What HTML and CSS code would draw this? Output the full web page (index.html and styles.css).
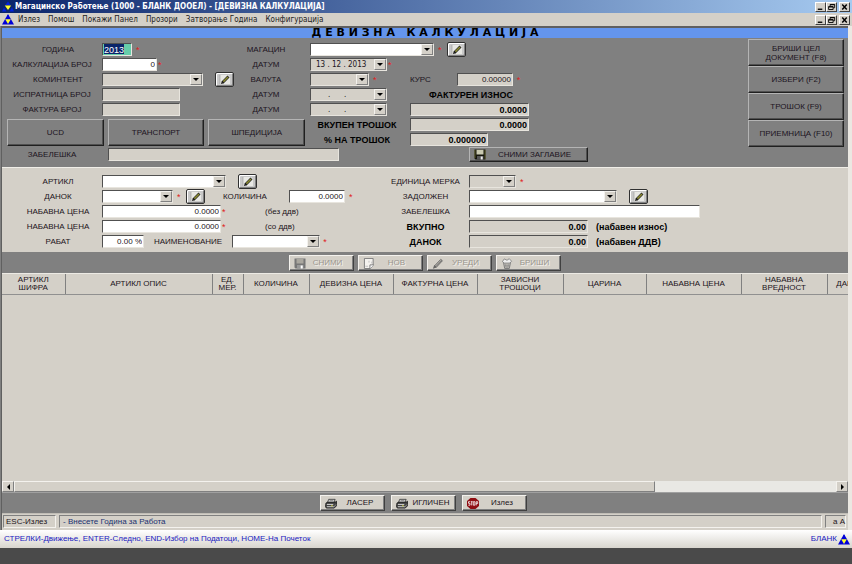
FILE: index.html
```html
<!DOCTYPE html>
<html lang="mk">
<head>
<meta charset="utf-8">
<title>Магацинско Работење</title>
<link rel="stylesheet" href="styles.css">
</head>
<body>
<svg class="defs" aria-hidden="true">
  <defs>
    <symbol id="logo" viewBox="0 0 12 11"><path d="M6 0L12 10.500H0Z" fill="#0000d8"/><path d="M3.200 5.200h5.600L6 10Z" fill="#ffff30"/><path d="M6 1v4" stroke="#0000d8"/></symbol>
    <symbol id="logo-small" viewBox="0 0 12 11"><path d="M6 .5l2.500 3.500h-5Z" fill="#0020e0"/><path d="M2.800 4.500h6.400L6 9Z" fill="#ffff30"/><path d="M2 6.500l2.500 4H0ZM10 6.500l2 4H7.500Z" fill="#0020e0"/></symbol>
    <symbol id="edit" viewBox="0 0 12 11"><path d="M1 1h8l2 2v7H1Z" fill="#e8e8e4"/><path d="M1 1v9" stroke="#999" stroke-width=".6"/><path d="M3.600 8.600L9.500 2.600" stroke="#222" stroke-width="2.800"/><path d="M4.400 7.600L9 3" stroke="#8b8b30" stroke-width="1.500"/><path d="M2 10l.8-2.800 2 2Z" fill="#111"/></symbol>
    <symbol id="disk" viewBox="0 0 12 11"><path d="M.5.500h11v10H1.500l-1-1Z" fill="#15150c"/><path d="M2.500.800h7v4.700h-7Z" fill="#c9c9b0"/><path d="M1 1v8M11 1v9" stroke="#70702c" stroke-width=".7"/><path d="M3 7h6.500v3.500H3Z" fill="#555"/><path d="M6.700 7.500h2v3h-2Z" fill="#eee"/></symbol>
    <symbol id="disk-off" viewBox="0 0 12 11"><path d="M.5.500h11v10H1.500l-1-1Z" fill="#777"/><path d="M2.500 1h7v4.500h-7Z" fill="#aaa79f"/><path d="M3 7h6.500v3.500H3Z" fill="#999"/><path d="M6.700 7.500h2v3h-2Z" fill="#fff"/></symbol>
    <symbol id="page-off" viewBox="0 0 12 12"><path d="M1 .500h9.500v7.500l-3 3.500H1Z" fill="#f4f2ee" stroke="#777"/><path d="M7 11.500V7.500h4" fill="#fff" stroke="#777"/><path d="M2 9h3M6 3v2M9 4v2" stroke="#bbb"/></symbol>
    <symbol id="pen-off" viewBox="0 0 12 12"><path d="M2.300 8.500L9 1.500l1.800 1.500-6.500 7Z" fill="#b4b1aa" stroke="#666"/><path d="M.4 11.700l1.500-4 2.600 2.600Z" fill="#666"/><path d="M4 9l6-6.500" stroke="#666" stroke-width=".7"/></symbol>
    <symbol id="bin-off" viewBox="0 0 12 12"><path d="M2 4h8l-1.500 7.500h-5Z" fill="#c9c6bf" stroke="#777"/><path d="M1 4l2-3 3 1.500L8.500.800 11 3.500 9 5.500H3Z" fill="#eee" stroke="#777" stroke-width=".8"/><path d="M4 6l1 5M6 6v5M8 6l-1 5M3 8.500h6" stroke="#888" stroke-width=".7"/></symbol>
    <symbol id="printer" viewBox="0 0 13 11"><path d="M4 1h7L9.500 5H2.500Z" fill="#ddd" stroke="#222" stroke-width=".8"/><path d="M1 5l2-1h8l1.500-1v5L10 10.500H1.500L.5 9Z" fill="#444" stroke="#111" stroke-width=".8"/><path d="M2 6.500h7M2 9h7.500" stroke="#ddd"/><path d="M9.500 9.500L12 6.500" stroke="#aaa" stroke-width=".8"/><path d="M5 2.500h4" stroke="#555" stroke-width=".7"/><path d="M6.500 8h2" stroke="#cccc40"/></symbol>
    <symbol id="stop" viewBox="0 0 12 11"><path d="M3.500 0h5L12 3v5l-3.500 3h-5L0 8V3Z" fill="#8f0d12"/><path d="M3 3.700H1.500v1.600H3v1.900H1.300M3.700 3.700h2M4.700 3.700v3.700M6.300 3.700h1.600v3.500H6.300ZM9.200 7.400V3.700h1.500v1.900H9.200" fill="none" stroke="#fff" stroke-width=".8"/></symbol>
    <symbol id="win-min" viewBox="0 0 10 8"><path d="M2 6.500h5" stroke="#000" stroke-width="1.500"/></symbol>
    <symbol id="win-restore" viewBox="0 0 10 8"><path d="M3.500 3V1.200h5v3.600H7M3.500 1.500h5M1.800 3.500h5v3.300h-5Z M1.800 4h5" fill="none" stroke="#000"/></symbol>
    <symbol id="win-close" viewBox="0 0 10 8"><path d="M2.500 1.200l5 5.600M7.500 1.200l-5 5.600" stroke="#000" stroke-width="1.600"/></symbol>
  </defs>
</svg>

<div class="app">
  <header class="titlebar">
    <svg class="logo"><use href="#logo-small"/></svg>
    <h1 class="title">Магацинско Работење (1000 - БЛАНК ДООЕЛ) - [ДЕВИЗНА КАЛКУЛАЦИЈА]</h1>
    <div class="winbtns">
      <button class="winbtn" aria-label="Минимизирај"><svg><use href="#win-min"/></svg></button>
      <button class="winbtn" aria-label="Обнови"><svg><use href="#win-restore"/></svg></button>
      <button class="winbtn winclose" aria-label="Затвори"><svg><use href="#win-close"/></svg></button>
    </div>
  </header>
  <nav class="menubar">
    <svg class="logo"><use href="#logo"/></svg>
    <a href="#">Излез</a><a href="#">Помош</a><a href="#">Покажи Панел</a><a href="#">Прозори</a><a href="#">Затворање Година</a><a href="#">Конфигурација</a>
    <div class="winbtns">
      <button class="winbtn" aria-label="Минимизирај прозорец"><svg><use href="#win-min"/></svg></button>
      <button class="winbtn" aria-label="Обнови прозорец"><svg><use href="#win-restore"/></svg></button>
      <button class="winbtn winclose" aria-label="Затвори прозорец"><svg><use href="#win-close"/></svg></button>
    </div>
  </nav>

  <main class="child">
    <h2 class="banner">Д Е В И З Н А   К А Л К У Л А Ц И Ј А</h2>

    <section class="head">
      <div class="head-form">
        <label class="lbl lbl-in" for="god">ГОДИНА</label>
        <div class="cell"><input id="god" class="field year" value="2013"><i class="req">*</i></div>
        <label class="lbl lbl-mid" for="mag">МАГАЦИН</label>
        <div class="cell span2"><span class="combo w124"><select id="mag"><option></option></select><b class="arrow"></b></span><i class="req">*</i><button class="edit" aria-label="Уреди магацин"><svg><use href="#edit"/></svg></button></div>

        <label class="lbl" for="kb">КАЛКУЛАЦИЈА БРОЈ</label>
        <div class="cell tight"><input id="kb" class="field w55 num" value="0"><i class="req">*</i></div>
        <label class="lbl lbl-mid" for="d1">ДАТУМ</label>
        <div class="cell span2 tight"><span class="combo off w76"><input id="d1" value="13 . 12 . 2013"><b class="arrow"></b></span><i class="req">*</i></div>

        <label class="lbl lbl-in" for="kom">КОМИНТЕНТ</label>
        <div class="cell gap-l"><span class="combo off w101"><select id="kom"><option></option></select><b class="arrow"></b></span><button class="edit" aria-label="Уреди коминтент"><svg><use href="#edit"/></svg></button></div>
        <label class="lbl lbl-mid" for="val">ВАЛУТА</label>
        <div class="cell"><span class="combo off w59"><select id="val"><option></option></select><b class="arrow"></b></span><i class="req">*</i></div>
        <div class="cell rate"><label for="kurs">КУРС</label><input id="kurs" class="field off w56 num" value="0.00000"><i class="req">*</i></div>

        <label class="lbl" for="ib">ИСПРАТНИЦА БРОЈ</label>
        <div class="cell"><input id="ib" class="field off w78"></div>
        <label class="lbl lbl-mid" for="d2">ДАТУМ</label>
        <div class="cell"><span class="combo off w76"><input id="d2" class="blank" value=".      ."><b class="arrow"></b></span></div>
        <label class="cell strong invoice" for="fi">ФАКТУРЕН ИЗНОС</label>

        <label class="lbl" for="fb">ФАКТУРА БРОЈ</label>
        <div class="cell"><input id="fb" class="field off w78"></div>
        <label class="lbl lbl-mid" for="d3">ДАТУМ</label>
        <div class="cell"><span class="combo off w76"><input id="d3" class="blank" value=".      ."><b class="arrow"></b></span></div>
        <div class="cell"><input id="fi" class="field off w119 num strong" value="0.0000"></div>

        <div class="docs"><button class="flat">UCD</button><button class="flat">ТРАНСПОРТ</button><button class="flat">ШПЕДИЦИЈА</button></div>
        <label class="lbl strong total" for="vt">ВКУПЕН ТРОШОК</label>
        <div class="cell"><input id="vt" class="field off w119 num strong" value="0.0000"></div>
        <label class="lbl strong total" for="pt">% НА ТРОШОК</label>
        <div class="cell"><input id="pt" class="field off w78 num strong" value="0.000000"></div>

        <label class="lbl" for="zab">ЗАБЕЛЕШКА</label>
        <div class="cell note"><input id="zab" class="field off w232"></div>
        <div class="cell save"><button class="flat savehead"><svg class="ico"><use href="#disk"/></svg><span>СНИМИ ЗАГЛАВИЕ</span></button></div>
      </div>
      <div class="actions">
        <button class="flat">БРИШИ ЦЕЛ<br>ДОКУМЕНТ (F8)</button>
        <button class="flat">ИЗБЕРИ (F2)</button>
        <button class="flat">ТРОШОК (F9)</button>
        <button class="flat">ПРИЕМНИЦА (F10)</button>
      </div>
    </section>

    <section class="item">
      <label class="lbl lbl-in" for="art">АРТИКЛ</label>
      <div class="cell gap-l"><span class="combo w124"><select id="art"><option></option></select><b class="arrow"></b></span><button class="edit" aria-label="Уреди артикл"><svg><use href="#edit"/></svg></button></div>
      <label class="lbl" for="em">ЕДИНИЦА МЕРКА</label>
      <div class="cell"><span class="combo off w47"><select id="em"><option></option></select><b class="arrow"></b></span><i class="req">*</i></div>

      <label class="lbl lbl-in" for="dan">ДАНОК</label>
      <div class="cell"><span class="combo w71"><select id="dan"><option></option></select><b class="arrow"></b></span><i class="req">*</i><button class="edit near" aria-label="Уреди данок"><svg><use href="#edit"/></svg></button><label class="qty" for="kol">КОЛИЧИНА</label><input id="kol" class="field w56 num" value="0.0000"><i class="req">*</i></div>
      <label class="lbl" for="zad">ЗАДОЛЖЕН</label>
      <div class="cell gap-l"><span class="combo w147"><select id="zad"><option></option></select><b class="arrow"></b></span><button class="edit" aria-label="Уреди задолжен"><svg><use href="#edit"/></svg></button></div>

      <label class="lbl lbl-in" for="nc1">НАБАВНА ЦЕНА</label>
      <div class="cell tight"><input id="nc1" class="field w119 num" value="0.0000"><i class="req">*</i><span class="hint">(без ддв)</span></div>
      <label class="lbl" for="zb2">ЗАБЕЛЕШКА</label>
      <div class="cell"><input id="zb2" class="field w232"></div>

      <label class="lbl lbl-in" for="nc2">НАБАВНА ЦЕНА</label>
      <div class="cell tight"><input id="nc2" class="field w119 num" value="0.0000"><i class="req">*</i><span class="hint">(со ддв)</span></div>
      <label class="lbl strong" for="vk">ВКУПНО</label>
      <div class="cell"><input id="vk" class="field off w119 num strong" value="0.00"><span class="strong desc">(набавен износ)</span></div>

      <label class="lbl lbl-in" for="rab">РАБАТ</label>
      <div class="cell gap-m"><input id="rab" class="field w42 num" value="0.00 %"><label for="nai">НАИМЕНОВАНИЕ</label><span class="combo w88"><select id="nai"><option></option></select><b class="arrow"></b></span><i class="req close">*</i></div>
      <label class="lbl strong" for="dn2">ДАНОК</label>
      <div class="cell"><input id="dn2" class="field off w119 num strong" value="0.00"><span class="strong desc">(набавен ДДВ)</span></div>
    </section>

    <div class="toolbar top">
      <button class="tool" disabled><svg class="ico"><use href="#disk-off"/></svg><span>СНИМИ</span></button>
      <button class="tool" disabled><svg class="ico"><use href="#page-off"/></svg><span>НОВ</span></button>
      <button class="tool" disabled><svg class="ico"><use href="#pen-off"/></svg><span>УРЕДИ</span></button>
      <button class="tool" disabled><svg class="ico"><use href="#bin-off"/></svg><span>БРИШИ</span></button>
    </div>

    <div class="grid">
      <table>
        <colgroup><col class="c63"><col class="c147"><col class="c31"><col class="c66"><col class="c84"><col class="c84"><col class="c86"><col class="c83"><col class="c95"><col class="c86"><col class="c46"></colgroup>
        <thead><tr><th>АРТИКЛ<br>ШИФРА</th><th>АРТИКЛ ОПИС</th><th>ЕД.<br>МЕР.</th><th>КОЛИЧИНА</th><th>ДЕВИЗНА ЦЕНА</th><th>ФАКТУРНА ЦЕНА</th><th>ЗАВИСНИ<br>ТРОШОЦИ</th><th>ЦАРИНА</th><th>НАБАВНА ЦЕНА</th><th>НАБАВНА<br>ВРЕДНОСТ</th><th>ДАНОК</th></tr></thead>
      </table>
    </div>
    <div class="scroll">
      <button class="sbtn" aria-label="Лево"><b class="tri left"></b></button>
      <div class="track"><div class="thumb"></div></div>
      <button class="sbtn" aria-label="Десно"><b class="tri right"></b></button>
    </div>

    <div class="toolbar bottom">
      <button class="tool"><svg class="ico"><use href="#printer"/></svg><span>ЛАСЕР</span></button>
      <button class="tool"><svg class="ico"><use href="#printer"/></svg><span>ИГЛИЧЕН</span></button>
      <button class="tool"><svg class="ico"><use href="#stop"/></svg><span>Излез</span></button>
    </div>

    <div class="status">
      <span class="pane key">ESC-Излез</span>
      <span class="pane msg">- Внесете Година за Работа</span>
      <span class="pane caps">а A</span>
    </div>
  </main>

  <footer class="keys">
    <span>СТРЕЛКИ-Движење, ENTER-Следно, END-Избор на Податоци, HOME-На Почеток</span>
    <span class="brand">БЛАНК<svg class="logo"><use href="#logo"/></svg></span>
  </footer>
</div>
</body>
</html>
```
FILE: styles.css
```css
:root {
  --face: #d4d0c8;
  --panel: #808080;
  --ui: "Liberation Sans", Arial, sans-serif;
  --menu: "DejaVu Sans Condensed", Tahoma, "Noto Sans", sans-serif;
  --wide: "DejaVu Sans", Verdana, sans-serif;
}
* { box-sizing: border-box; }
body { margin: 0; background: #4a4a4a; font: 8px/12px var(--ui); color: #1c1420; }
button, input, select { font: inherit; color: inherit; margin: 0; padding: 0; border-radius: 0; }
i, b { font-style: normal; }
.defs { position: absolute; width: 0; height: 0; }
.app { min-height: 100vh; display: flex; flex-direction: column; padding-bottom: 16px; }
.logo { width: 12px; height: 11px; flex: none; }

/* title bar and menu */
.titlebar { display: flex; align-items: center; height: 13px; padding: 0 2px; background: linear-gradient(90deg, #0a246a, #a6caf0); }
.title { flex: 1; margin: 0 0 0 1px; font: bold 8px/13px var(--menu); color: #fff; white-space: nowrap; }
.menubar { display: flex; align-items: center; height: 13px; padding: 0 2px; background: var(--face); font: 8px/12px var(--menu); }
.menubar a { color: #222; text-decoration: none; margin-right: 8px; white-space: nowrap; }
.menubar .logo { margin-right: 4px; }
.winbtns { display: flex; margin-left: auto; }
.winbtn { width: 11px; height: 10px; background: var(--face); border: 1px solid; border-color: #fff #404040 #404040 #fff; display: flex; }
.winbtn svg { width: 9px; height: 8px; }
.winclose { margin-left: 2px; }

/* child window */
.child { flex: 1; display: flex; flex-direction: column; border: solid #606060; border-width: 2px 0 0 1px; margin: 0 4px 0 1px; background: var(--face); box-shadow: 4px 0 0 #ebe8e2, -1px 0 0 #808080; }
.banner { margin: 0; background: #6495ed; font: bold 11px/10px var(--wide); color: #000; text-align: center; white-space: pre; }

.head { display: flex; justify-content: space-between; background: var(--panel); padding: 4px 4px 5px 0; }
.head-form { display: grid; grid-template-columns: 100px 136px 72px 100px 180px; grid-auto-rows: 15px; }
.lbl { display: flex; align-items: center; justify-content: center; white-space: nowrap; }
.lbl-in { padding-left: 12px; }
.lbl-mid { padding-right: 16px; }
.cell { display: flex; align-items: center; gap: 4px; min-width: 0; white-space: nowrap; }
.span2 { grid-column: span 2; }
.tight { gap: 1px; }
.gap-l { gap: 12px; }
.gap-m { gap: 10px; }
.strong { font-weight: bold; font-size: 9px; color: #000; }
.total { padding-right: 6px; }
.invoice { padding-left: 19px; }
.rate .field { margin-left: 22px; }
.docs { grid-column: 1 / 4; grid-row: 6 / 8; display: flex; gap: 4px; padding: 2px 5px 1px 5px; }
.docs .flat { flex: 1; }
.note { grid-column: 2 / 5; padding-left: 6px; }
.save { padding-left: 59px; }

.field, .combo { height: 13px; background: #fff; border: 1px solid; border-color: #505050 #e8e5de #e8e5de #505050; flex: none; }
.field { padding: 0 1px; line-height: 11px; }
.off { background: var(--face); }
.num { text-align: right; }
.year { width: 30px; font-size: 9px; color: #fff; background: linear-gradient(#0a246a, #0a246a) 1px 0 / 20px 10px no-repeat #66cdaa; }
.combo { display: inline-grid; grid-template: 11px / 1fr; }
.combo select, .combo input { grid-area: 1 / 1; width: 100%; height: 11px; border: 0; background: none; appearance: none; outline: 0; }
.combo input { padding-left: 5px; font: 8px/11px var(--menu); }
.combo .blank { padding-left: 17px; }
.arrow { grid-area: 1 / 1; justify-self: end; width: 12px; height: 11px; background: var(--face); border: 1px solid; border-color: #f4f2ee #808080 #808080 #f4f2ee; pointer-events: none; display: flex; align-items: center; justify-content: center; }
.arrow::after { content: ""; border: solid transparent; border-width: 3px 3px 0; border-top-color: #000; }
.req { color: #e02020; width: 5px; font-size: 9px; line-height: 9px; height: 8px; }
.edit { width: 19px; height: 15px; flex: none; background: #c8c8c8; border: 1px solid #303030; border-radius: 2px; box-shadow: inset 1px 1px 0 #fff, inset -1px -1px 0 #808080; display: flex; align-items: center; justify-content: center; }
.edit svg { width: 12px; height: 11px; }

.w42 { width: 42px; }
.w47 { width: 47px; }
.w55 { width: 55px; }
.w56 { width: 56px; }
.w59 { width: 59px; }
.w71 { width: 71px; }
.w76 { width: 77px; }
.w78 { width: 78px; }
.w88 { width: 88px; }
.w101 { width: 101px; }
.w119 { width: 119px; }
.w124 { width: 124px; }
.w147 { width: 148px; }
.w232 { width: 231px; }

.flat, .tool { border: 1px solid; cursor: default; }
.flat { background: var(--panel); border-color: #b4b4b4 #202020 #202020 #b4b4b4; box-shadow: inset -1px -1px 0 #505050; line-height: 9px; }
.actions { display: grid; grid-auto-rows: 27px; width: 96px; margin-top: -3px; align-content: start; }
.savehead { width: 119px; height: 15px; display: flex; align-items: center; padding: 0 4px; }
.savehead span { flex: 1; }
.ico { width: 12px; height: 11px; flex: none; }

/* item panel */
.item { display: grid; grid-template-columns: 100px 280px 87px 1fr; grid-auto-rows: 15px; padding: 6px 0 3px; border-top: 1px solid #f0eee8; }
.qty { margin-left: 14px; }
.near + .qty + .field { margin-left: 18px; }
.hint { margin-left: 37px; }
.close { margin-left: -7px; }
.desc { margin-left: 4px; }

/* tool bars */
.toolbar { display: flex; justify-content: center; background: var(--panel); }
.top { gap: 4px; padding: 3px 0 2px; }
.bottom { gap: 6px; padding: 2px 4px 2px 0; border-top: 1px solid #a0a0a0; }
.tool { width: 65px; height: 16px; background: var(--face); border-color: #f4f2ee #404040 #404040 #f4f2ee; box-shadow: inset -1px -1px 0 #808080; display: flex; align-items: center; padding: 0 4px; }
.tool span { flex: 1; text-align: center; }
.bottom .tool span { padding-left: 4px; }
.tool:disabled { color: #9a968e; text-shadow: 1px 1px 0 #f4f2ee; }

/* item list */
.grid { flex: 1; overflow: hidden; border-top: 1px solid #eceae4; }
table { table-layout: fixed; width: 825px; min-width: 871px; border-collapse: collapse; }
th { height: 20px; padding: 0; font-weight: normal; line-height: 8px; border-right: 1px solid #808080; border-bottom: 1px solid #909090; }
.c31 { width: 31px; }
.c46 { width: 46px; }
.c63 { width: 63px; }
.c66 { width: 66px; }
.c83 { width: 83px; }
.c84 { width: 84px; }
.c86 { width: 86px; }
.c95 { width: 95px; }
.c147 { width: 147px; }
.scroll { display: flex; height: 11px; }
.sbtn { width: 12px; background: var(--face); border: 1px solid; border-color: #f4f2ee #808080 #808080 #f4f2ee; display: flex; align-items: center; justify-content: center; }
.tri { border: 3px solid transparent; }
.left { border-left: 0; border-right-color: #000; }
.right { border-right: 0; border-left-color: #000; }
.track { flex: 1; background: #e9e8e4; }
.thumb { width: 78%; height: 11px; background: var(--face); border: 1px solid; border-color: #f4f2ee #808080 #808080 #f4f2ee; }

/* status and key hints */
.status { display: flex; gap: 3px; padding: 1px 2px 2px 1px; border-top: 1px solid #c0bdb6; }
.pane { height: 13px; padding: 0 2px; border: 1px solid; border-color: #808080 #f4f2ee #f4f2ee #808080; line-height: 11px; }
.key { width: 53px; }
.msg { flex: 1; padding-left: 3px; color: #203070; }
.caps { width: 21px; text-align: right; padding: 0; }
.keys { display: flex; justify-content: space-between; align-items: center; height: 18px; padding: 0 2px 0 4px; background: linear-gradient(#fff, #d8d5ce); color: #2020c0; }
.brand { display: flex; align-items: center; gap: 1px; }
```
